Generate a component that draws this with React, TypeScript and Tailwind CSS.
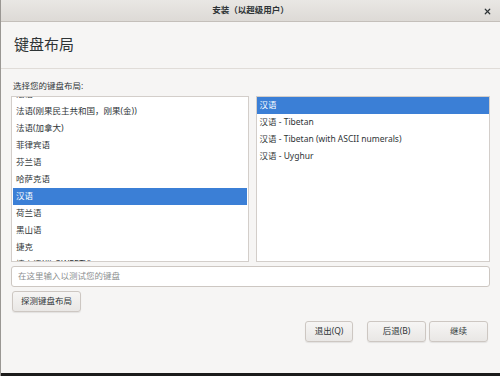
import React from 'react';
import { X } from 'lucide-react';

const font = { fontFamily: '"Noto Sans", "Noto Sans CJK SC", sans-serif' };

const leftItems = [
  '法语',
  '法语(刚果民主共和国，刚果(金))',
  '法语(加拿大)',
  '菲律宾语',
  '芬兰语',
  '哈萨克语',
  '汉语',
  '荷兰语',
  '黑山语',
  '捷克',
  '捷克语(带 QWERTY)',
];

const rightItems = ['汉语', '汉语 - Tibetan', '汉语 - Tibetan (with ASCII numerals)', '汉语 - Uyghur'];

const Row: React.FC<{ label: string; selected?: boolean }> = ({ label, selected }) => (
  <div
    className={
      'h-[17px] flex items-center px-[3px] whitespace-nowrap ' +
      (selected ? 'bg-[#3b7fd6] text-white' : 'text-[#2e3436]')
    }
  >
    {label}
  </div>
);

const Button: React.FC<{ children: React.ReactNode; className?: string }> = ({ children, className }) => (
  <button
    className={
      'h-[21px] rounded-[3px] border border-[#cdc7c2] bg-gradient-to-b from-[#f6f5f4] to-[#e9e7e5] text-[#2e3436] shadow-[0_1px_1px_rgba(0,0,0,0.08)] ' +
      (className ?? '')
    }
  >
    {children}
  </button>
);

const App: React.FC = () => {
  return (
    <div
      className="w-[500px] h-[376px] flex flex-col bg-[#f6f5f4] text-[8.5px] text-[#2e3436] overflow-hidden border-l border-[#9a9793]"
      style={font}
    >
      {/* title bar */}
      <div className="h-[22px] shrink-0 relative flex items-center justify-center bg-gradient-to-b from-[#e9e7e4] to-[#dddad6] border-b border-[#c4bfba]">
        <span className="font-bold text-[8.5px] text-[#2e3436]">安装（以超级用户）</span>
        <X className="absolute right-[8px] top-[7px] text-[#2e3436]" size={9} strokeWidth={3.2} />
      </div>

      {/* header */}
      <div className="h-[47px] shrink-0 flex items-center pl-[13px] border-b border-[#e0dcd8]">
        <span className="text-[15px] text-[#2e3436] leading-none mb-[2px]">键盘布局</span>
      </div>

      <div className="flex flex-col px-[10px] pt-[11px]">
        <div className="pl-[2px] h-[12px] leading-[12px] text-[#2e3436]">选择您的键盘布局:</div>

        <div className="flex gap-[7px] mt-[4px] h-[166px]">
          <div className="w-[238px] h-full bg-white border border-[#d3ceca] overflow-hidden">
            <div className="mt-[-11px] pl-[1px] pr-[1px]">
              {leftItems.map((it) => (
                <Row key={it} label={it} selected={it === '汉语'} />
              ))}
            </div>
          </div>
          <div className="w-[235px] h-full bg-white border border-[#d3ceca] overflow-hidden">
            {rightItems.map((it, i) => (
              <Row key={it} label={it} selected={i === 0} />
            ))}
          </div>
        </div>

        <div className="mt-[4px] h-[21px] rounded-[3px] border border-[#cdc7c2] bg-white flex items-center pl-[6px] text-[#8b8e8f]">
          在这里输入以测试您的键盘
        </div>

        <Button className="mt-[4px] ml-[1px] w-[69px]">探测键盘布局</Button>

        <div className="mt-[9px] flex justify-end pr-[2px]">
          <Button className="w-[48px]">退出(Q)</Button>
          <Button className="w-[59px] ml-[14px]">后退(B)</Button>
          <Button className="w-[59px] ml-[3px]">继续</Button>
        </div>
      </div>

      <div className="mt-auto h-[3px] bg-[#1b1b1b] shrink-0" />
    </div>
  );
};

export default App;
